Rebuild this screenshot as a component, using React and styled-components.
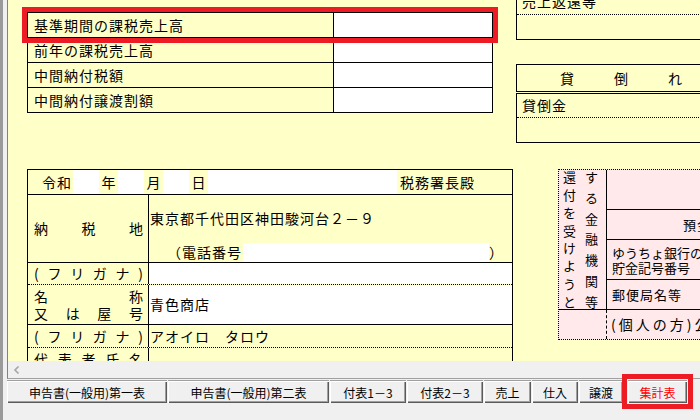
import styled, { createGlobalStyle } from 'styled-components';

const FONT = '"Noto Sans CJK JP", "Noto Sans", sans-serif';
const YELLOW = '#ffffc8';
const PINK = '#ffe9eb';

const GlobalStyle = createGlobalStyle`
  html, body { margin: 0; padding: 0; background: #f0f0f0; }
  * { box-sizing: border-box; }
`;

const Window = styled.div`
  display: flex;
  width: 700px;
  height: 420px;
  overflow: hidden;
  background: #f0f0f0;
  font-family: ${FONT};
  color: #000;
`;

const EdgeStrip = styled.div`
  flex: none;
  width: 3px;
  background: #9a9a9a;
`;

const Body = styled.div`
  flex: 1;
  min-width: 0;
  display: flex;
  flex-direction: column;
`;

const Frame = styled.div`
  flex: none;
  height: 379px;
  margin-left: 4px;
  border-left: 1px solid #828282;
  border-bottom: 1px solid #a0a0a0;
  display: flex;
  flex-direction: column;
`;

const Sheet = styled.div`
  flex: none;
  height: 361px;
  background: ${YELLOW};
  overflow: hidden;
  display: flex;
  align-items: flex-start;
  font-size: 14px;
  letter-spacing: 1px;
  line-height: 17px;
`;

const HScroll = styled.div`
  flex: none;
  height: 17px;
  padding-left: 5px;
  display: flex;
  align-items: center;
  background: #f0f0f0;
`;

/* ---------- left column ---------- */

const LeftCol = styled.div`
  flex: none;
  width: 486px;
  margin-left: 19px;
`;

const TopTable = styled.div`
  margin-top: 12px;
  width: 466px;
  border: 1px solid #000;
`;

const TopRow = styled.div`
  display: flex;
  height: 24px;
  & + & {
    height: 25px;
    border-top: 1px solid #000;
  }
  ${p => p.$marked && `
    position: relative;
    z-index: 1;
    outline: 5px solid #ed1c24;
    outline-offset: 1px;
  `}
`;

const TopLabel = styled.div`
  flex: none;
  width: 306px;
  padding-left: 6px;
  border-right: 1px solid #000;
  display: flex;
  align-items: center;
`;

const WhiteCell = styled.div`
  flex: ${p => (p.$w ? 'none' : 1)};
  width: ${p => (p.$w ? `${p.$w}px` : 'auto')};
  background: #fff;
`;

const LowerTable = styled.div`
  margin-top: 56px;
  width: 486px;
  border: 1px solid #000;
  border-bottom: none;
`;

const FormRow = styled.div`
  display: flex;
  height: ${p => p.$h}px;
  border-top: ${p => (p.$line ? `1px ${p.$line} #000` : 'none')};
`;

const DateCell = styled.div`
  flex: none;
  width: ${p => p.$w}px;
  padding-left: ${p => p.$pad || 0}px;
  display: flex;
  align-items: center;
  justify-content: ${p => (p.$pad != null ? 'flex-start' : 'center')};
  letter-spacing: ${p => (p.$pad != null ? '1px' : '0')};
`;

const FormLabel = styled.div`
  flex: none;
  width: 121px;
  padding: ${p => (p.$top ? '3px' : '0')} 5px 0 6px;
  border-right: 1px solid #000;
  display: flex;
  flex-direction: column;
  justify-content: ${p => (p.$top ? 'flex-start' : 'center')};
`;

const Spread = styled.div`
  display: flex;
  justify-content: space-between;
  line-height: 17px;
  letter-spacing: 0;
`;

const FormValue = styled.div`
  flex: 1;
  min-width: 0;
  padding-left: 1px;
  background: ${p => (p.$white ? '#fff' : 'transparent')};
  display: flex;
  flex-direction: column;
  justify-content: center;
  white-space: nowrap;
`;

const AddressLine = styled.div`
  padding-top: 15px;
  line-height: 16px;
`;

const PhoneLine = styled.div`
  margin-top: auto;
  height: 19px;
  display: flex;
  align-items: center;
`;

const PhoneLabel = styled.span`
  padding-left: 17px;
  width: 93px;
`;

const PhoneInput = styled.div`
  align-self: stretch;
  width: 246px;
  background: #fff;
`;

/* ---------- right column ---------- */

const RightCol = styled.div`
  flex: none;
  width: 300px;
  margin-left: 3px;
  margin-top: -12px;
  display: flex;
  flex-direction: column;
`;

const Box = styled.div`
  margin-top: ${p => p.$mt || 0}px;
  border: 1px solid #000;
`;

const BoxRow = styled.div`
  height: ${p => p.$h}px;
  padding-left: ${p => p.$pad ?? 5}px;
  border-top: ${p => (p.$dotted ? '1px dotted #000' : 'none')};
  display: flex;
  align-items: center;
  gap: ${p => p.$gap || 0}px;
`;

const PinkBox = styled.div`
  margin: 26px 0 0 42px;
  width: 200px;
  height: 171px;
  border: 1px dotted #000;
  border-right: none;
  background: ${PINK};
  font-size: 13px;
  letter-spacing: 1px;
  display: flex;
  flex-direction: column;
`;

const PinkUpper = styled.div`
  flex: none;
  height: 140px;
  border-bottom: 1px solid #000;
  display: flex;
`;

const VerticalCell = styled.div`
  flex: none;
  width: 48px;
  padding-left: 4px;
  border-right: 1px ${p => p.$dashed ? 'dashed' : 'solid'} #000;
  display: flex;
  gap: 8px;
`;

const VerticalText = styled.div`
  width: 14px;
  display: flex;
  flex-direction: column;
  justify-content: space-between;
  line-height: 14px;
  letter-spacing: 0;
`;

const PinkRows = styled.div`
  flex: 1;
  display: flex;
  flex-direction: column;
`;

const PinkRow = styled.div`
  flex: ${p => (p.$h ? 'none' : 1)};
  height: ${p => (p.$h ? `${p.$h}px` : 'auto')};
  padding-left: ${p => p.$pad ?? 5}px;
  border-bottom: ${p => (p.$h ? '1px solid #000' : 'none')};
  display: flex;
  flex-direction: column;
  justify-content: center;
  line-height: 15px;
  letter-spacing: ${p => (p.$tight ? '0' : '1px')};
  white-space: nowrap;
`;

const PinkLower = styled.div`
  flex: 1;
  display: flex;
`;

const NoteText = styled.div`
  padding-left: 4px;
  display: flex;
  align-items: center;
  letter-spacing: 3px;
  font-size: 14px;
  white-space: nowrap;
`;

/* ---------- tabs ---------- */

const TabBar = styled.div`
  display: flex;
  gap: 1px;
  padding: 1px 0 0 4px;
`;

const Tab = styled.button`
  flex: none;
  width: ${p => p.$w}px;
  height: 23px;
  margin-left: ${p => p.$gap || 0}px;
  padding: 0;
  border: none;
  border-top: 1px solid #a0a0a0;
  background: #f0f0f0;
  box-shadow: inset 1px 0 #ffffff, inset 0 1px #ffffff, inset -1px -1px #5a5a5a, inset -2px -2px #a0a0a0;
  font-family: ${FONT};
  font-size: 12px;
  color: ${p => (p.$active ? '#ff0000' : '#000')};
  outline: ${p => (p.$active ? '5px solid #ed1c24' : 'none')};
  outline-offset: 1px;
  white-space: nowrap;
`;

const tabs = [
  { label: '申告書(一般用)第一表', w: 160 },
  { label: '申告書(一般用)第二表', w: 161 },
  { label: '付表1－3', w: 76 },
  { label: '付表2－3', w: 76 },
  { label: '売上', w: 47 },
  { label: '仕入', w: 46 },
  { label: '譲渡', w: 44 },
  { label: '集計表', w: 59, active: true, gap: 4 },
];

const topRows = ['基準期間の課税売上高', '前年の課税売上高', '中間納付税額', '中間納付譲渡割額'];

const spread = text => text.split('').map((c, i) => <span key={i}>{c}</span>);

export default function App() {
  return (
    <Window>
      <GlobalStyle />
      <EdgeStrip />
      <Body>
        <Frame>
          <Sheet>
            <LeftCol>
              <TopTable>
                {topRows.map((label, i) => (
                  <TopRow key={label} $marked={i === 0}>
                    <TopLabel>{label}</TopLabel>
                    <WhiteCell />
                  </TopRow>
                ))}
              </TopTable>

              <LowerTable>
                <FormRow $h={24}>
                  <DateCell $w={45} $pad={14}>令和</DateCell>
                  <WhiteCell $w={26} />
                  <DateCell $w={19}>年</DateCell>
                  <WhiteCell $w={26} />
                  <DateCell $w={19}>月</DateCell>
                  <WhiteCell $w={26} />
                  <DateCell $w={19}>日</DateCell>
                  <WhiteCell />
                  <DateCell $w={115} $pad={3}>税務署長殿</DateCell>
                </FormRow>

                <FormRow $h={68} $line="solid">
                  <FormLabel>
                    <Spread>{spread('納税地')}</Spread>
                  </FormLabel>
                  <FormValue>
                    <AddressLine>東京都千代田区神田駿河台２－９</AddressLine>
                    <PhoneLine>
                      <PhoneLabel>（電話番号</PhoneLabel>
                      <PhoneInput />
                      <span>）</span>
                    </PhoneLine>
                  </FormValue>
                </FormRow>

                <FormRow $h={22} $line="solid">
                  <FormLabel>
                    <Spread>{spread('(フリガナ)')}</Spread>
                  </FormLabel>
                  <FormValue $white />
                </FormRow>

                <FormRow $h={40} $line="dotted">
                  <FormLabel>
                    <Spread>{spread('名称')}</Spread>
                    <Spread>{spread('又は屋号')}</Spread>
                  </FormLabel>
                  <FormValue $white>青色商店</FormValue>
                </FormRow>

                <FormRow $h={23} $line="solid">
                  <FormLabel>
                    <Spread>{spread('(フリガナ)')}</Spread>
                  </FormLabel>
                  <FormValue>アオイロ　タロウ</FormValue>
                </FormRow>

                <FormRow $h={30} $line="dotted">
                  <FormLabel $top>
                    <Spread>{spread('代表者氏名')}</Spread>
                  </FormLabel>
                  <FormValue />
                </FormRow>
              </LowerTable>
            </LeftCol>

            <RightCol>
              <Box>
                <BoxRow $h={25}>売上返還等</BoxRow>
                <BoxRow $h={25} $dotted />
              </Box>

              <Box $mt={24}>
                <BoxRow $h={26} $pad={43} $gap={39}>
                  <span>貸</span>
                  <span>倒</span>
                  <span>れ</span>
                </BoxRow>
              </Box>

              <Box $mt={1}>
                <BoxRow $h={23}>貸倒金</BoxRow>
                <BoxRow $h={25} $dotted />
              </Box>

              <PinkBox>
                <PinkUpper>
                  <VerticalCell>
                    <VerticalText>{spread('還付を受けようと')}</VerticalText>
                    <VerticalText>{spread('する金融機関等')}</VerticalText>
                  </VerticalCell>
                  <PinkRows>
                    <PinkRow $h={40} />
                    <PinkRow $h={30} $pad={76}>預金口座番号</PinkRow>
                    <PinkRow $h={40} $tight>
                      <div>ゆうちょ銀行の</div>
                      <div>貯金記号番号</div>
                    </PinkRow>
                    <PinkRow>郵便局名等</PinkRow>
                  </PinkRows>
                </PinkUpper>
                <PinkLower>
                  <VerticalCell $dashed />
                  <NoteText>(個人の方)公金受取口座の利用</NoteText>
                </PinkLower>
              </PinkBox>
            </RightCol>
          </Sheet>

          <HScroll>
            <svg width="8" height="8" viewBox="0 0 8 8">
              <polyline points="5.5,0.5 2,4 5.5,7.5" fill="none" stroke="#a6a6a6" strokeWidth="1.6" />
            </svg>
          </HScroll>
        </Frame>

        <TabBar>
          {tabs.map(t => (
            <Tab key={t.label} $w={t.w} $gap={t.gap} $active={t.active}>
              {t.label}
            </Tab>
          ))}
        </TabBar>
      </Body>
    </Window>
  );
}
